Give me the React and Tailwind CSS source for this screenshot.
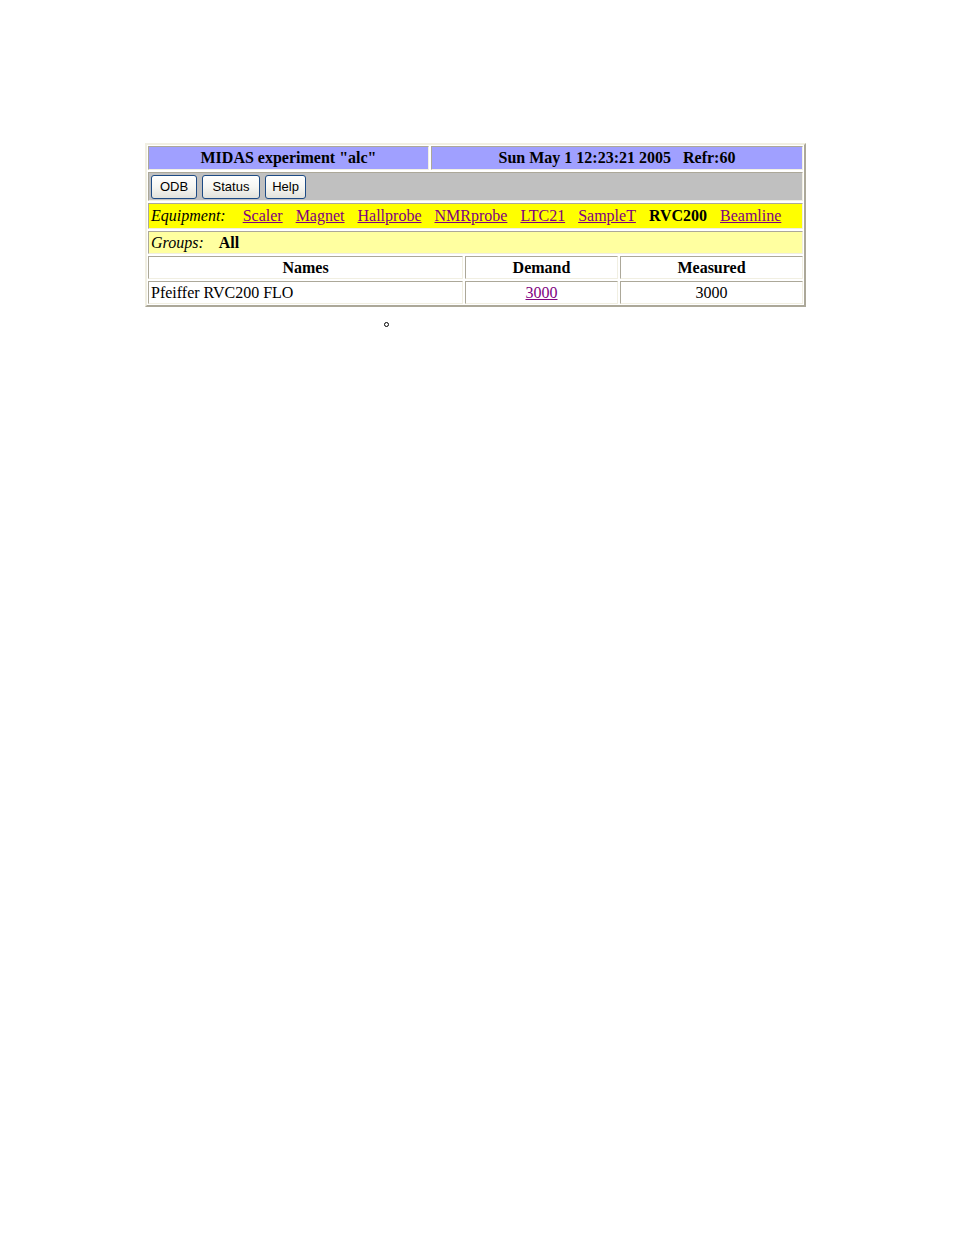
import React from 'react';

const serif = { fontFamily: '"Liberation Serif", "Times New Roman", serif' };

const Cell = ({ className = '', children }) => (
    <div className={`border border-t-[#aca899] border-l-[#aca899] border-b-[#f1efe2] border-r-[#f1efe2] flex items-center ${className}`}>
        {children}
    </div>
);

const Button = ({ label, width }) => (
    <button
        className={`${width} h-[24px] border border-[#1c4a84] rounded-[3px] bg-linear-to-b from-white via-[#f6f6f2] to-[#e2e2dc] text-[13px] text-black flex items-center justify-center`}
        style={{ fontFamily: '"Liberation Sans", Arial, sans-serif' }}
    >
        {label}
    </button>
);

const equipment = ['Scaler', 'Magnet', 'Hallprobe', 'NMRprobe', 'LTC21', 'SampleT', 'RVC200', 'Beamline'];

const App = () => {
    return (
        <div className="min-h-[1235px] bg-white pt-[143px] pl-[145px]" style={serif}>
            <div className="w-[661px] border-2 border-t-[#f1efe2] border-l-[#f1efe2] border-b-[#aca899] border-r-[#aca899] p-px flex flex-col gap-[2px] text-[16px] text-black">
                {/* title row */}
                <div className="flex gap-[2px] h-[24px]">
                    <Cell className="w-[281px] bg-[#a0a0ff] justify-center font-bold">MIDAS experiment "alc"</Cell>
                    <Cell className="flex-1 bg-[#a0a0ff] justify-center font-bold whitespace-pre">Sun May 1 12:23:21 2005   Refr:60</Cell>
                </div>

                {/* buttons */}
                <Cell className="h-[29px] bg-[#c0c0c0] px-[2px] gap-[5px]">
                    <Button label="ODB" width="w-[46px]" />
                    <Button label="Status" width="w-[58px]" />
                    <Button label="Help" width="w-[41px]" />
                </Cell>

                {/* equipment */}
                <Cell className="h-[26px] bg-[#ffff00] px-[2px]">
                    <span className="italic mr-[17px]">Equipment:</span>
                    <div className="flex gap-[13px]">
                        {equipment.map((eq) =>
                            eq === 'RVC200' ? (
                                <span key={eq} className="font-bold">{eq}</span>
                            ) : (
                                <a key={eq} href="#" className="text-[#800080] underline">{eq}</a>
                            )
                        )}
                    </div>
                </Cell>

                {/* groups */}
                <Cell className="h-[23px] bg-[#ffffa0] px-[2px]">
                    <span className="italic mr-[15px]">Groups:</span>
                    <span className="font-bold">All</span>
                </Cell>

                {/* header */}
                <div className="flex gap-[2px] h-[23px] font-bold">
                    <Cell className="w-[315px] bg-white justify-center">Names</Cell>
                    <Cell className="w-[153px] bg-white justify-center">Demand</Cell>
                    <Cell className="flex-1 bg-white justify-center">Measured</Cell>
                </div>

                {/* data */}
                <div className="flex gap-[2px] h-[23px]">
                    <Cell className="w-[315px] bg-white px-[2px]">Pfeiffer RVC200 FLO</Cell>
                    <Cell className="w-[153px] bg-white justify-center">
                        <a href="#" className="text-[#800080] underline">3000</a>
                    </Cell>
                    <Cell className="flex-1 bg-white justify-center">3000</Cell>
                </div>
            </div>

            <div className="ml-[239px] mt-[15px] w-[5px] h-[5px] rounded-full border border-black"></div>
        </div>
    );
};

export default App;
